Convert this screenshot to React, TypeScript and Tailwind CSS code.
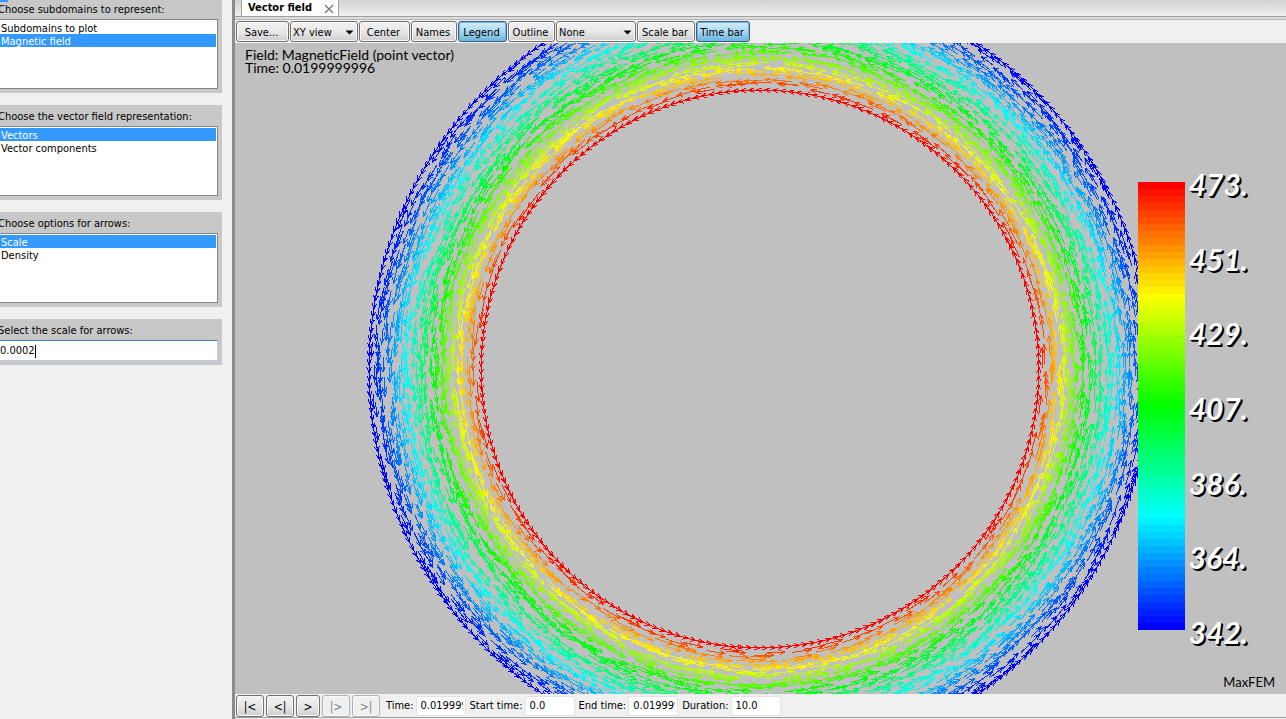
import React from "react";

const RED_RADIUS = 279;
const BLUE_RADIUS = 391;
const BANDS = 64;

function bandColor(t: number) {
  return `hsl(${Math.round((1 - t) * 240)} 100% 50%)`;
}

function makeRandom(seed: number) {
  let s = seed;
  return () => {
    s = (s * 1664525 + 1013904223) % 4294967296;
    return s / 4294967296;
  };
}

function arrowPath(cx: number, cy: number, r: number, angle: number, len: number) {
  const x = cx + r * Math.cos(angle);
  const y = cy + r * Math.sin(angle);
  const dir = angle - Math.PI / 2 - len / (2 * r);
  const ex = x + len * Math.cos(dir);
  const ey = y + len * Math.sin(dir);
  const barb = (side: number) => {
    const a = dir + Math.PI + side * 0.38;
    return `${(ex + 6 * Math.cos(a)).toFixed(1)} ${(ey + 6 * Math.sin(a)).toFixed(1)}`;
  };
  const tip = `${ex.toFixed(1)} ${ey.toFixed(1)}`;
  return `M${x.toFixed(1)} ${y.toFixed(1)}L${tip}M${barb(1)}L${tip}L${barb(-1)}`;
}

function buildField() {
  const rand = makeRandom(11);
  const paths: string[] = Array.from({ length: BANDS }, () => "");
  const rings = 20;
  const inv = 1 / RED_RADIUS - 1 / BLUE_RADIUS;
  for (let i = 0; i < rings; i++) {
    const base = RED_RADIUS + ((BLUE_RADIUS - RED_RADIUS) * i) / (rings - 1);
    const edge = i === 0 || i === rings - 1;
    const spacing = edge ? 8 : i < 3 ? 14 : 9;
    const count = Math.round((2 * Math.PI * base) / spacing);
    const phase = rand() * Math.PI;
    for (let k = 0; k < count; k++) {
      const wobble = edge ? 0 : (rand() - 0.5) * (i < 3 ? 5 : 9);
      const r = Math.min(BLUE_RADIUS, Math.max(RED_RADIUS, base + wobble));
      const angle = phase + ((k + (edge ? 0 : rand())) * 2 * Math.PI) / count;
      const t = Math.min(1, Math.max(0, (1 / r - 1 / BLUE_RADIUS) / inv));
      const band = Math.min(BANDS - 1, Math.floor(t * BANDS));
      paths[band] += arrowPath(525, 326, r, angle, 15 + t * 5);
    }
  }
  return paths;
}

const FIELD = buildField();

function ListPanel({ id, label, items, selected }: { id: string; label: string; items: string[]; selected: string }) {
  return (
    <section className="bg-[#c8c8c8] pb-1 pr-1">
      <label htmlFor={id} className="-ml-0.5 block h-[21px] whitespace-nowrap pt-[3px] leading-[18px]">
        {label}
      </label>
      <select
        id={id}
        size={5}
        defaultValue={selected}
        className="block h-[70px] w-full appearance-none overflow-hidden border border-l-0 border-[#828790] bg-white py-px pr-px outline-none"
      >
        {items.map((item) => (
          <option
            key={item}
            value={item}
            className="box-border h-[13px] min-h-0 p-0 pl-px pt-px leading-[13px] text-black checked:bg-[linear-gradient(#3399ff,#3399ff)] checked:text-white"
          >
            {item}
          </option>
        ))}
      </select>
    </section>
  );
}

function ToolButton({ children, width, active = false }: { children: React.ReactNode; width: string; active?: boolean }) {
  const look = active
    ? "border-[#2c628b] from-[#d5ecf9] via-[#a8d9f2] to-[#68b3db] shadow-[inset_0_0_0_1px_#7fb4d2]"
    : "border-[#707070] from-[#f2f2f2] via-[#e8e8e8] to-[#cfcfcf] shadow-[inset_0_0_0_1px_#fafafa]";
  return (
    <button
      type="button"
      aria-pressed={active}
      className={`h-[21px] shrink-0 whitespace-nowrap rounded-[3px] border bg-linear-to-b pr-0.5 pt-0.5 leading-[17px] ${width} ${look}`}
    >
      {children}
    </button>
  );
}

function ToolSelect({ label, value, width }: { label: string; value: string; width: string }) {
  return (
    <div className={`relative shrink-0 ${width}`}>
      <select
        aria-label={label}
        defaultValue={value}
        className="block h-[21px] w-full appearance-none rounded-[3px] border border-[#707070] bg-linear-to-b from-[#f2f2f2] via-[#e8e8e8] to-[#cfcfcf] pl-0.5 pt-0.5 leading-[17px] shadow-[inset_0_0_0_1px_#fafafa] outline-none"
      >
        <option>{value}</option>
      </select>
      <svg className="pointer-events-none absolute right-1 top-[9px] h-[5px] w-[9px]" viewBox="0 0 9 5" aria-hidden="true">
        <path d="M0.5 0.5H8.5L4.5 4.5Z" fill="#000" />
      </svg>
    </div>
  );
}

function StepButton({ label, glyph, width, disabled = false }: { label: string; glyph: string; width: string; disabled?: boolean }) {
  return (
    <button
      type="button"
      aria-label={label}
      disabled={disabled}
      className={`h-[22px] shrink-0 rounded-[3px] border border-[#707070] bg-linear-to-b from-[#f2f2f2] via-[#e8e8e8] to-[#cfcfcf] pt-0.5 text-xs leading-[18px] shadow-[inset_0_0_0_1px_#fafafa] disabled:border-[#adb2b5] disabled:bg-none disabled:text-[#838383] ${width}`}
    >
      {glyph}
    </button>
  );
}

function TimeField({ id, label, value }: { id: string; label: string; value: string }) {
  return (
    <div className="flex items-center gap-0.5">
      <label htmlFor={id} className="whitespace-nowrap pt-0.5">
        {label}
      </label>
      <input
        id={id}
        defaultValue={value}
        className="h-5 w-[50px] rounded-[2px] border border-[#e2e3ea] bg-white pl-1 pr-0.5 outline-none"
      />
    </div>
  );
}

export default function App() {
  return (
    <div className="flex h-screen overflow-hidden bg-[#f0f0f0] font-['DejaVu_Sans_Condensed','DejaVu_Sans',sans-serif] text-[11px] text-black">
      <aside className="relative w-[222px] shrink-0">
        <div className="absolute left-0 top-0 h-0.5 w-2 bg-[#3399ff]" />
        <div className="h-[93px] overflow-hidden">
          <div className="-mt-0.5">
            <ListPanel id="subdomains" label="Choose subdomains to represent:" items={["Subdomains to plot", "Magnetic field"]} selected="Magnetic field" />
          </div>
        </div>
        <div className="mt-3 flex flex-col gap-3">
          <ListPanel id="representation" label="Choose the vector field representation:" items={["Vectors", "Vector components"]} selected="Vectors" />
          <ListPanel id="options" label="Choose options for arrows:" items={["Scale", "Density"]} selected="Scale" />
          <section className="bg-[#c8c8c8] pb-1 pr-1">
            <label htmlFor="scale" className="-ml-0.5 block h-[21px] pt-[3px] leading-[18px]">
              Select the scale for arrows:
            </label>
            <div className="flex h-[21px] items-center border border-l-0 border-[#b5cfe7] border-t-[#3d7bad] bg-white pt-px">
              <input id="scale" defaultValue="0.0002" className="field-sizing-content bg-transparent outline-none" />
              <span className="h-[13px] w-px bg-black" />
            </div>
          </section>
        </div>
      </aside>

      <main className="ml-2.5 flex min-w-0 flex-1 flex-col border-l-[3px] border-[#8c8c8c]">
        <div className="flex h-[17px] shrink-0 items-start border-b border-[#a0a0a0] bg-linear-to-b from-[#d2d2d2] to-[#efefef] pl-1.5">
          <div className="flex h-4 items-center gap-3 border-x border-[#a0a0a0] bg-white pl-1.5 pr-1 pt-px">
            <span className="whitespace-nowrap font-bold">Vector field</span>
            <button type="button" aria-label="Close tab" className="flex items-center">
              <svg className="h-[10px] w-[10px]" viewBox="0 0 10 10" aria-hidden="true">
                <path d="M1 1L9 9M9 1L1 9" stroke="#707070" strokeWidth="1.2" />
              </svg>
            </button>
          </div>
        </div>
        <div className="h-[3px] shrink-0 border-b border-[#b4b4b4] bg-[#dcdcdc]" />

        <div className="mt-px flex h-[22px] shrink-0 items-start gap-px pl-px">
          <ToolButton width="w-[53px]">Save...</ToolButton>
          <ToolSelect label="View" value="XY view" width="w-[68px]" />
          <ToolButton width="w-[51px]">Center</ToolButton>
          <ToolButton width="w-[46px]">Names</ToolButton>
          <ToolButton width="w-[49px]" active>
            Legend
          </ToolButton>
          <ToolButton width="w-[47px]">Outline</ToolButton>
          <ToolSelect label="Color by" value="None" width="w-[80px]" />
          <ToolButton width="w-[58px]">Scale bar</ToolButton>
          <ToolButton width="w-[54px]" active>
            Time bar
          </ToolButton>
        </div>

        <div className="relative min-h-0 flex-1 overflow-hidden bg-[#c0c0c0]">
          <svg
            className="absolute inset-0 h-full w-full"
            viewBox="0 0 1051 651"
            preserveAspectRatio="xMidYMid slice"
            shapeRendering="crispEdges"
            fill="none"
            strokeWidth="1"
            aria-hidden="true"
          >
            {FIELD.map((d, i) => (
              <path key={i} d={d} stroke={bandColor(i / (BANDS - 1))} />
            ))}
          </svg>

          <div className="absolute left-2.5 top-[5px] font-['Lato',sans-serif] text-sm leading-[13px]">
            <p>Field: MagneticField (point vector)</p>
            <p>Time: 0.0199999996</p>
          </div>

          <div className="absolute right-[38px] top-[126px] flex items-start gap-1">
            <div className="mt-[13px] w-[47px]">
              {Array.from({ length: BANDS }, (_, i) => (
                <div key={i} className="h-[7px]" style={{ backgroundColor: bandColor(1 - i / (BANDS - 1)) }} />
              ))}
            </div>
            <div className="flex h-[478px] flex-col justify-between font-['Lato',sans-serif] text-[30px] font-bold italic leading-[30px] text-white [text-shadow:1px_1px_0_#000,2px_2px_0_#000]">
              {["473.", "451.", "429.", "407.", "386.", "364.", "342."].map((v) => (
                <span key={v}>{v}</span>
              ))}
            </div>
          </div>

          <span className="absolute bottom-1 right-[11px] font-['Lato',sans-serif] text-[13px] leading-[15px]">MaxFEM</span>
        </div>

        <div className="flex h-6 shrink-0 items-center gap-0.5 border-b border-[#a0a0a0] pl-px">
          <StepButton label="First step" glyph="|<" width="w-7" />
          <StepButton label="Previous step" glyph="<|" width="w-7" />
          <StepButton label="Next step" glyph=">" width="w-6" />
          <StepButton label="Step forward" glyph="|>" width="w-7" disabled />
          <StepButton label="Last step" glyph=">|" width="w-7" disabled />
          <div className="ml-1 flex gap-1">
            <TimeField id="time" label="Time:" value="0.0199999996" />
            <TimeField id="start" label="Start time:" value="0.0" />
            <TimeField id="end" label="End time:" value="0.0199999996" />
            <TimeField id="duration" label="Duration:" value="10.0" />
          </div>
        </div>
        <div className="h-px shrink-0" />
      </main>
    </div>
  );
}
